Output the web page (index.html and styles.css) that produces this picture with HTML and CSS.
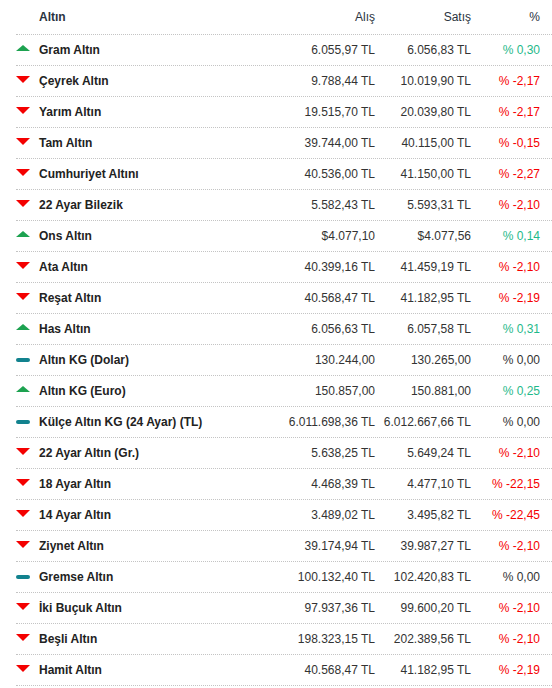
FILE: index.html
```html
<!DOCTYPE html>
<html lang="tr">
<head>
<meta charset="utf-8">
<link rel="stylesheet" href="styles.css">
</head>
<body>
<div class="table">
  <div class="row head">
    <div class="name"><span class="icon"></span><span class="title">Altın</span></div>
    <div class="num">Alış</div>
    <div class="num">Satış</div>
    <div class="num pct">%</div>
  </div>
  <div class="row"><div class="name"><span class="icon up"></span>Gram Altın</div><div class="num">6.055,97 TL</div><div class="num">6.056,83 TL</div><div class="num pct pos">% 0,30</div></div>
  <div class="row"><div class="name"><span class="icon down"></span>Çeyrek Altın</div><div class="num">9.788,44 TL</div><div class="num">10.019,90 TL</div><div class="num pct neg">% -2,17</div></div>
  <div class="row"><div class="name"><span class="icon down"></span>Yarım Altın</div><div class="num">19.515,70 TL</div><div class="num">20.039,80 TL</div><div class="num pct neg">% -2,17</div></div>
  <div class="row"><div class="name"><span class="icon down"></span>Tam Altın</div><div class="num">39.744,00 TL</div><div class="num">40.115,00 TL</div><div class="num pct neg">% -0,15</div></div>
  <div class="row"><div class="name"><span class="icon down"></span>Cumhuriyet Altını</div><div class="num">40.536,00 TL</div><div class="num">41.150,00 TL</div><div class="num pct neg">% -2,27</div></div>
  <div class="row"><div class="name"><span class="icon down"></span>22 Ayar Bilezik</div><div class="num">5.582,43 TL</div><div class="num">5.593,31 TL</div><div class="num pct neg">% -2,10</div></div>
  <div class="row"><div class="name"><span class="icon up"></span>Ons Altın</div><div class="num">$4.077,10</div><div class="num">$4.077,56</div><div class="num pct pos">% 0,14</div></div>
  <div class="row"><div class="name"><span class="icon down"></span>Ata Altın</div><div class="num">40.399,16 TL</div><div class="num">41.459,19 TL</div><div class="num pct neg">% -2,10</div></div>
  <div class="row"><div class="name"><span class="icon down"></span>Reşat Altın</div><div class="num">40.568,47 TL</div><div class="num">41.182,95 TL</div><div class="num pct neg">% -2,19</div></div>
  <div class="row"><div class="name"><span class="icon up"></span>Has Altın</div><div class="num">6.056,63 TL</div><div class="num">6.057,58 TL</div><div class="num pct pos">% 0,31</div></div>
  <div class="row"><div class="name"><span class="icon flat"></span>Altın KG (Dolar)</div><div class="num">130.244,00</div><div class="num">130.265,00</div><div class="num pct">% 0,00</div></div>
  <div class="row"><div class="name"><span class="icon up"></span>Altın KG (Euro)</div><div class="num">150.857,00</div><div class="num">150.881,00</div><div class="num pct pos">% 0,25</div></div>
  <div class="row"><div class="name"><span class="icon flat"></span>Külçe Altın KG (24 Ayar) (TL)</div><div class="num">6.011.698,36 TL</div><div class="num">6.012.667,66 TL</div><div class="num pct">% 0,00</div></div>
  <div class="row"><div class="name"><span class="icon down"></span>22 Ayar Altın (Gr.)</div><div class="num">5.638,25 TL</div><div class="num">5.649,24 TL</div><div class="num pct neg">% -2,10</div></div>
  <div class="row"><div class="name"><span class="icon down"></span>18 Ayar Altın</div><div class="num">4.468,39 TL</div><div class="num">4.477,10 TL</div><div class="num pct neg">% -22,15</div></div>
  <div class="row"><div class="name"><span class="icon down"></span>14 Ayar Altın</div><div class="num">3.489,02 TL</div><div class="num">3.495,82 TL</div><div class="num pct neg">% -22,45</div></div>
  <div class="row"><div class="name"><span class="icon down"></span>Ziynet Altın</div><div class="num">39.174,94 TL</div><div class="num">39.987,27 TL</div><div class="num pct neg">% -2,10</div></div>
  <div class="row"><div class="name"><span class="icon flat"></span>Gremse Altın</div><div class="num">100.132,40 TL</div><div class="num">102.420,83 TL</div><div class="num pct">% 0,00</div></div>
  <div class="row"><div class="name"><span class="icon down"></span>İki Buçuk Altın</div><div class="num">97.937,36 TL</div><div class="num">99.600,20 TL</div><div class="num pct neg">% -2,10</div></div>
  <div class="row"><div class="name"><span class="icon down"></span>Beşli Altın</div><div class="num">198.323,15 TL</div><div class="num">202.389,56 TL</div><div class="num pct neg">% -2,10</div></div>
  <div class="row"><div class="name"><span class="icon down"></span>Hamit Altın</div><div class="num">40.568,47 TL</div><div class="num">41.182,95 TL</div><div class="num pct neg">% -2,19</div></div>
</div>
</body>
</html>
```
FILE: styles.css
```css
html, body {
  margin: 0;
  padding: 0;
  background: #fff;
}
body {
  font-family: "Liberation Sans", Arial, sans-serif;
  font-size: 12px;
  color: #333;
}
.table {
  margin-left: 16px;
  width: 536px;
}
.row {
  display: grid;
  grid-template-columns: 263px 96px 96px 69px;
  padding-right: 12px;
  height: 30px;
  align-items: center;
  border-bottom: 1px dotted #c4c4c4;
}
.row.head {
  height: 34px;
}
.name {
  display: flex;
  align-items: center;
  font-weight: bold;
  color: #222;
  white-space: nowrap;
}
.head .name .title {
  font-weight: bold;
  color: #2a3340;
}
.head .num {
  color: #2a3340;
}
.icon {
  display: inline-block;
  width: 14px;
  margin-right: 9px;
  flex: none;
}
.icon.up {
  width: 0;
  height: 0;
  border-left: 7px solid transparent;
  border-right: 7px solid transparent;
  border-bottom: 6px solid #1da250;
  margin-top: -4px;
}
.icon.down {
  width: 0;
  height: 0;
  border-left: 7px solid transparent;
  border-right: 7px solid transparent;
  border-top: 7px solid #f40000;
  margin-top: -3px;
}
.icon.flat {
  height: 4px;
  border-radius: 2px;
  background: #12828e;
}
.num {
  text-align: right;
  white-space: nowrap;
  color: #333;
}
.pct.pos {
  color: #1fb98a;
}
.pct.neg {
  color: #f60000;
}
```
